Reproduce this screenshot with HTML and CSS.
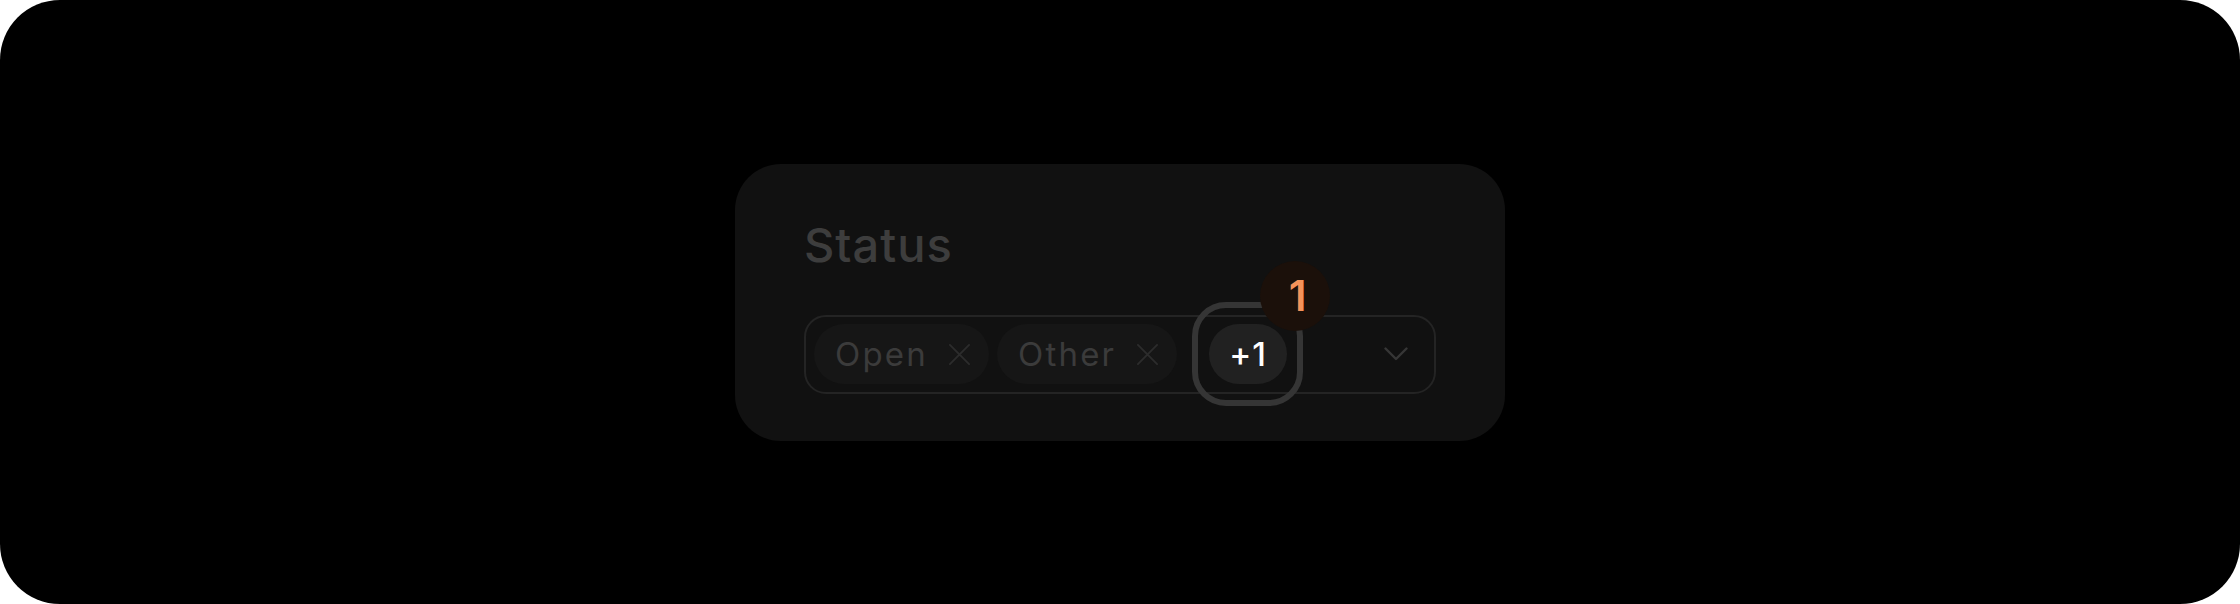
FILE: index.html
```html
<!DOCTYPE html>
<html lang="en">
<head>
<meta charset="utf-8">
<title>Status</title>
<link rel="stylesheet" href="styles.css">
</head>
<body>
<div class="screen">
  <section class="card">
    <h2 class="title">Status</h2>
    <div class="select">
      <span class="chip">
        <span class="chip-label">Open</span>
        <svg class="chip-x" viewBox="0 0 24 24" width="24" height="24"><path d="M2 2 L22 22 M22 2 L2 22" fill="none" stroke="currentColor" stroke-width="2" stroke-linecap="round"/></svg>
      </span>
      <span class="chip">
        <span class="chip-label">Other</span>
        <svg class="chip-x" viewBox="0 0 24 24" width="24" height="24"><path d="M2 2 L22 22 M22 2 L2 22" fill="none" stroke="currentColor" stroke-width="2" stroke-linecap="round"/></svg>
      </span>
      <span class="more">+1<span class="badge">1</span></span>
      <svg class="chevron" viewBox="0 0 24 14" width="24" height="14"><path d="M1.5 1.5 L12 12 L22.5 1.5" fill="none" stroke="currentColor" stroke-width="2.4" stroke-linecap="round" stroke-linejoin="round"/></svg>
    </div>
  </section>
</div>
</body>
</html>
```

FILE: styles.css
```css
* { box-sizing: border-box; }
html, body { margin: 0; padding: 0; background: #ffffff; }
body { font-family: "Inter", "Liberation Sans", sans-serif; }

.screen {
  width: 2240px;
  height: 604px;
  background: #000000;
  border-radius: 60px;
  display: flex;
  align-items: center;
  justify-content: center;
}

.card {
  width: 770px;
  height: 277px;
  background: #111111;
  border-radius: 46px;
  padding: 53px 69px 0 69px;
  display: flex;
  flex-direction: column;
}

.title {
  margin: 0 0 42px 0;
  font-size: 47px;
  line-height: 56px;
  font-weight: 500;
  color: #3d3d3d;
  letter-spacing: 1px;
}

.select {
  height: 79px;
  border: 2px solid #242424;
  border-radius: 22px;
  padding: 0 26px 0 8px;
  display: flex;
  align-items: center;
  gap: 8px;
}

.chip {
  height: 60px;
  border-radius: 30px;
  background: #161616;
  padding: 0 18px 0 21px;
  display: inline-flex;
  align-items: center;
  gap: 20px;
  color: #3b3b3b;
  font-size: 33px;
  font-weight: 400;
  letter-spacing: 2.2px;
}
.chip-label { line-height: 1; }
.chip-x { color: #2c2c2c; width: 23px; height: 23px; display: block; }

.more {
  position: relative;
  margin-left: 24px;
  width: 78px;
  height: 60px;
  border-radius: 30px;
  background: #212121;
  color: #ffffff;
  font-size: 33px;
  font-weight: 500;
  letter-spacing: 1px;
  display: inline-flex;
  align-items: center;
  justify-content: center;
}
.more::before {
  content: "";
  position: absolute;
  top: -22px;
  bottom: -22px;
  left: -17px;
  right: -16px;
  border: 6px solid #353535;
  border-radius: 34px;
}

.badge {
  position: absolute;
  left: 51px;
  top: -63px;
  width: 70px;
  height: 70px;
  border-radius: 999px;
  background: #1b100a;
  color: #f5935a;
  font-size: 42px;
  font-weight: 600;
  letter-spacing: 0;
  line-height: 70px;
  text-align: center;
  padding-left: 5px;
  z-index: 1;
}

.chevron {
  margin-left: auto;
  color: #363636;
  display: block;
}
```
